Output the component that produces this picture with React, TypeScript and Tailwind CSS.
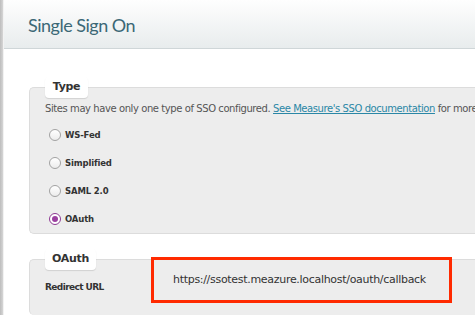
import React from 'react'

const OPTIONS = ['WS-Fed', 'Simplified', 'SAML 2.0', 'OAuth']

function Radio({ checked }: { checked?: boolean }) {
  if (checked) {
    return (
      <span className="flex h-[12px] w-[12px] items-center justify-center rounded-full border border-[#8e3a93] bg-white">
        <span className="h-[6px] w-[6px] rounded-full bg-[#9b3fa0]" />
      </span>
    )
  }
  return <span className="h-[12px] w-[12px] rounded-full border border-[#a2a2a2] bg-gradient-to-b from-white to-[#ececec]" />
}

function Legend({ children, width }: { children: React.ReactNode; width: string }) {
  return (
    <div
      className={`${width} ml-[15px] -mt-[11px] flex h-[21px] items-center justify-center rounded-[4px] bg-white text-[11px] font-bold tracking-[-0.3px] text-[#333] shadow-[0_1px_1px_rgba(0,0,0,0.12)]`}
    >
      {children}
    </div>
  )
}

export default function App() {
  return (
    <div className="flex h-[315px] w-[475px] overflow-hidden bg-white font-['DejaVu_Sans',sans-serif]">
      <div className="w-[3px] shrink-0 bg-gradient-to-r from-[#bdbdbd] to-[#d6d6d6]" />
      <div className="w-[1px] shrink-0 bg-[#f2f2f2]" />
      <div className="flex min-w-0 flex-1 flex-col">
        <div className="flex h-[49px] shrink-0 items-center border-b border-[#cfd6d8] bg-gradient-to-b from-[#fefefe] to-[#e8eced] pl-[24px]">
          <h1 className="pt-[3px] font-['Lato',sans-serif] text-[18px] font-normal tracking-[-0.5px] text-[#3b6876]">
            Single Sign On
          </h1>
        </div>

        <div className="ml-[25px] mt-[38px] flex h-[147px] flex-col rounded-l-[5px] border border-r-0 border-[#dcdcdc] bg-[#ededed]">
          <Legend width="w-[43px]">Type</Legend>
          <p className="ml-[15px] mt-[2px] whitespace-nowrap text-[10px] leading-[18px] tracking-[-0.42px] text-[#555]">
            Sites may have only one type of SSO configured.{' '}
            <a className="text-[#2a87a6] underline">See Measure's SSO documentation</a> for more information.
          </p>
          <div className="ml-[19px] mt-[3px] flex flex-col">
            {OPTIONS.map((o) => (
              <label key={o} className="flex h-[28px] items-center gap-[4px] text-[8.5px] font-bold tracking-[-0.15px] text-[#333]">
                <Radio checked={o === 'OAuth'} />
                {o}
              </label>
            ))}
          </div>
        </div>

        <div className="ml-[25px] mt-[25px] flex flex-1 flex-col rounded-l-[5px] border border-b-0 border-r-0 border-[#dcdcdc] bg-[#ededed]">
          <Legend width="w-[51px]">OAuth</Legend>
          <div className="-mt-[13px] flex items-start">
            <div className="w-[121px] shrink-0 pl-[15px] pt-[24px] text-[9px] font-bold tracking-[-0.6px] text-[#333]">
              Redirect URL
            </div>
            <div className="flex h-[46px] w-[301px] shrink-0 items-center border-[3px] border-[#ff2a00] pl-[19px] text-[11px] tracking-[-0.3px] text-[#333]">
              https://ssotest.meazure.localhost/oauth/callback
            </div>
          </div>
        </div>
      </div>
    </div>
  )
}
